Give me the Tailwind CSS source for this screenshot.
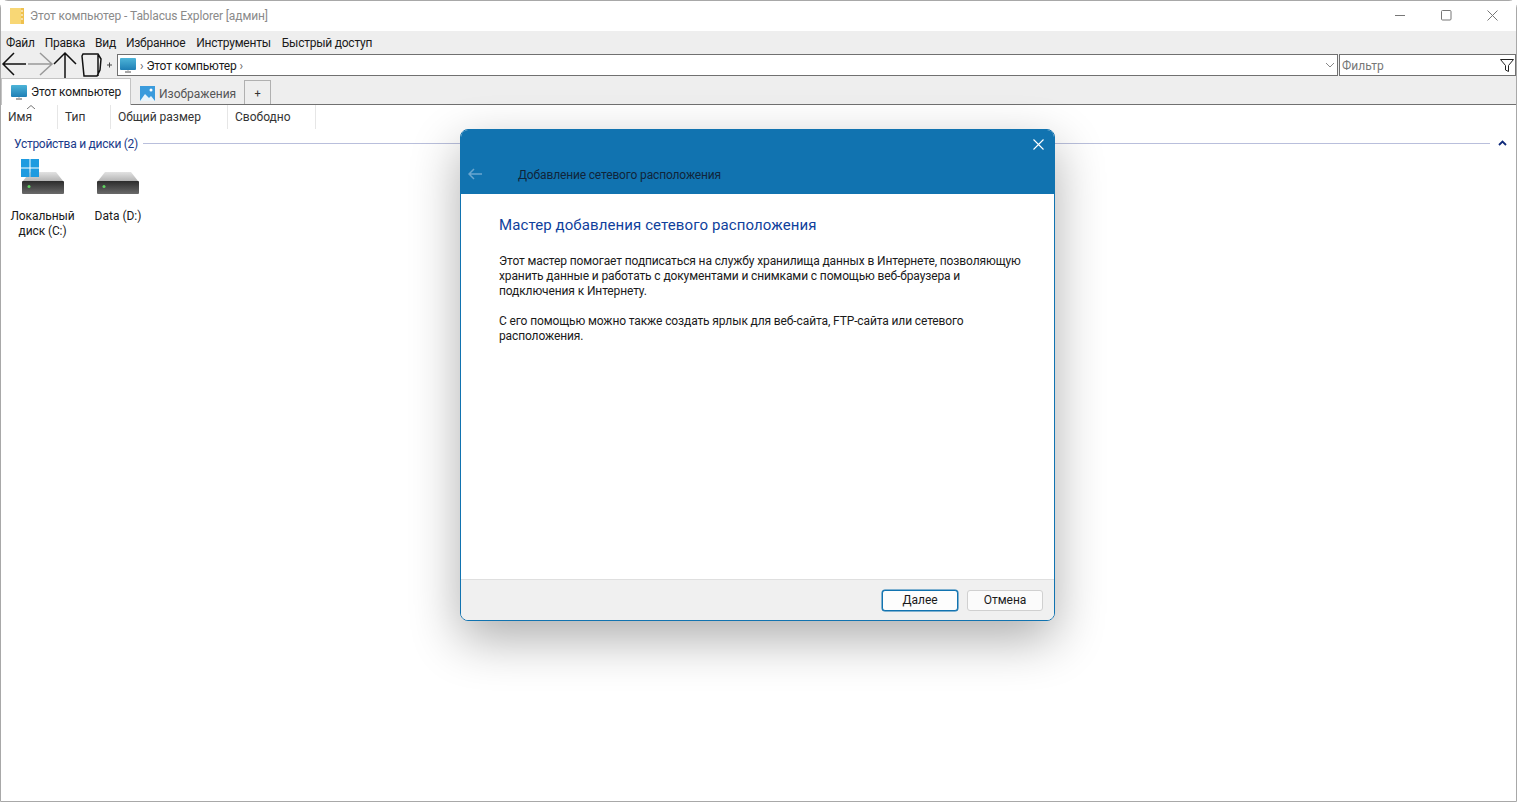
<!DOCTYPE html>
<html lang="ru">
<head>
    <meta charset="UTF-8">
    <title>Этот компьютер - Tablacus Explorer [админ]</title>
    <script src="https://cdn.jsdelivr.net/npm/@tailwindcss/browser@4"></script>
</head>
<body class="bg-white font-['Roboto',sans-serif] text-[12px] text-[#1a1a1a] overflow-hidden">

<div class="relative h-[802px] w-[1517px] overflow-hidden">
    <div class="h-full w-full flex flex-col border border-[#a8a8a8] rounded-t-lg bg-white">

        <!-- TITLE BAR -->
        <div class="h-[30px] shrink-0 flex items-center pl-[9px] bg-white">
            <svg width="15" height="16" viewBox="0 0 15 16"><rect x="0" y="0" width="14" height="16" fill="#f8d775"/><rect x="11" y="0" width="3" height="16" fill="#efc14f"/><path d="M12 2v2M12 6v2M12 10v2" stroke="#fff" stroke-width="1"/></svg>
            <span class="ml-[5px] text-[#8a8a8a] tracking-[-0.12px]">Этот компьютер - Tablacus Explorer [админ]</span>
            <div class="ml-auto flex items-center gap-[35px] pr-[18px] mb-[1px]">
                <svg width="11" height="11" viewBox="0 0 11 11"><path d="M0 5.500h10" stroke="#777" stroke-width="1"/></svg>
                <svg width="11" height="11" viewBox="0 0 11 11"><rect x=".5" y=".5" width="9.500" height="9.500" rx="1" fill="none" stroke="#777"/></svg>
                <svg width="11" height="11" viewBox="0 0 11 11"><path d="M.5.5l10 10M10.500.5l-10 10" stroke="#777"/></svg>
            </div>
        </div>

        <!-- MENU + TOOLBAR + TABS -->
        <div class="bg-[#eeeeee] shrink-0">
            <div class="h-[23px] flex items-center gap-[10px] pl-[5px] tracking-[-0.24px]">
                <span>Файл</span><span>Правка</span><span>Вид</span><span>Избранное</span><span class="ml-[1px]">Инструменты</span><span class="ml-[1px]">Быстрый доступ</span>
            </div>
            <div class="h-[22px] flex items-center">
                <svg width="115" height="26" viewBox="0 0 115 26" class="shrink-0 overflow-visible relative z-20 mt-[2px]">
                    <path d="M25 11H2M13 0L2 11l11 11" fill="none" stroke="#111" stroke-width="1.500"/>
                    <path d="M27 11h24M39 0l12 11-12 11" fill="none" stroke="#999" stroke-width="1.500"/>
                    <path d="M64 25V0M53 11L64 0l11 11" fill="none" stroke="#111" stroke-width="1.500"/>
                    <path d="M81 3l1-2h15l3 5-1 11-3 6H83zM97 2v21" fill="none" stroke="#111" stroke-width="1.500"/>
                    <path d="M106 12h5M108.500 9.500v5" stroke="#444"/>
                </svg>
                <div class="ml-[1px] h-[22px] w-[1221px] flex items-center bg-white border border-[#707070] tracking-[-0.2px]">
                    <svg width="17" height="15" viewBox="0 0 17 15" class="ml-[2px] shrink-0"><defs><linearGradient id="scr" x1="0" y1="0" x2="0" y2="1"><stop offset="0" stop-color="#4db4d8"/><stop offset="1" stop-color="#1f7fb5"/></linearGradient></defs><rect x="0" y="0" width="16" height="12" rx="1" fill="url(#scr)"/><path d="M5 14h6" stroke="#8a8a8a" stroke-width="1.500"/><path d="M8 12v2" stroke="#aaa"/></svg>
                    <span class="ml-[3px] text-[#666] pt-[1px]">›</span>
                    <span class="ml-[3px] pt-[1px]">Этот компьютер</span>
                    <span class="ml-[3px] text-[#666] pt-[1px]">›</span>
                    <svg width="10" height="6" viewBox="0 0 10 6" class="ml-auto mr-[2px]"><path d="M1 1l4 4 4-4" fill="none" stroke="#888"/></svg>
                </div>
                <div class="ml-[1px] h-[22px] w-[177px] flex items-center bg-white border border-[#707070] pl-[2px] text-[#777]">
                    <span class="pt-[1px]">Фильтр</span>
                    <svg width="14" height="13" viewBox="0 0 14 13" class="ml-auto mr-[1px]"><path d="M.5.5h13L8.500 6.500v6l-3-1.500V6.500z" fill="none" stroke="#222"/></svg>
                </div>
            </div>
            <div class="h-[28px] flex items-end relative">
                <div class="h-[27px] w-[130px] flex items-center bg-white border border-b-0 border-[#c4c4c4] relative z-10 -mb-px pl-[9px] tracking-[-0.2px]">
                    <svg width="17" height="15" viewBox="0 0 17 15" class="shrink-0"><rect x="0" y="0" width="16" height="12" rx="1" fill="url(#scr)"/><path d="M5 14h6" stroke="#8a8a8a" stroke-width="1.500"/><path d="M8 12v2" stroke="#aaa"/></svg>
                    <span class="ml-[3px]">Этот компьютер</span>
                </div>
                <div class="h-[24px] w-[114px] flex items-center border-r border-[#b0b0b0] pl-[9px] pt-[3px]">
                    <svg width="15" height="15" viewBox="0 0 15 15" class="shrink-0"><rect width="15" height="15" fill="#3a9bdc"/><path d="M0 15l5-7 4 4 2-2 4 5z" fill="#e8f4fb"/><circle cx="11" cy="4" r="1.500" fill="#fff"/></svg>
                    <span class="ml-[4px] text-[#555]">Изображения</span>
                </div>
                <div class="h-[24px] w-[26px] flex items-center justify-center border-r border-t border-[#b0b0b0] text-[11px] text-[#333] pt-[3px]">+</div>
            </div>
        </div>

        <!-- FILE VIEW -->
        <div class="flex-1 bg-white border-t border-[#707070] relative">
            <div class="h-[24px] flex items-center text-[#333]">
                <div class="relative w-[57px] h-full flex items-center pl-[7px] border-r border-[#e6e6e6]">Имя
                    <svg width="8" height="4" viewBox="0 0 8 4" class="absolute left-[26px] top-0"><path d="M0 4l4-3.500L8 4" fill="none" stroke="#777"/></svg>
                </div>
                <div class="w-[53px] h-full flex items-center pl-[7px] border-r border-[#e6e6e6]">Тип</div>
                <div class="w-[117px] h-full flex items-center pl-[7px] border-r border-[#e6e6e6]">Общий размер</div>
                <div class="w-[88px] h-full flex items-center pl-[7px] border-r border-[#e6e6e6]">Свободно</div>
            </div>
            <div class="flex items-center h-[20px] mt-[4px] pl-[13px] pr-[9px]">
                <span class="text-[#1a3a8a] tracking-[-0.27px] pt-[1px]">Устройства и диски (2)</span>
                <div class="flex-1 h-px bg-[#b9bfdc] ml-[5px]"></div>
                <svg width="9" height="6" viewBox="0 0 9 6" class="ml-[8px]"><path d="M1 5l3.500-3.500L8 5" fill="none" stroke="#0f2a7a" stroke-width="1.800"/></svg>
            </div>
            <div class="flex mt-[6px] pl-[9px]">
                <div class="w-[65px] flex flex-col items-center">
                    <div class="relative w-[48px] h-[47px]">
                        <svg width="44" height="24" viewBox="0 0 44 24" class="absolute left-[2px] top-[12px]"><defs><linearGradient id="top" x1="0" y1="0" x2="0" y2="1"><stop offset="0" stop-color="#e2e2e2"/><stop offset="1" stop-color="#b4b4b4"/></linearGradient><linearGradient id="body" x1="0" y1="0" x2="0" y2="1"><stop offset="0" stop-color="#2c2c2c"/><stop offset="1" stop-color="#6a6a6a"/></linearGradient></defs><path d="M9 1h26l7 9H2z" fill="url(#top)"/><rect x="1" y="10" width="42" height="13" rx="1" fill="url(#body)"/><circle cx="8" cy="15.500" r="1.500" fill="#5fd35f"/></svg>
                        <svg width="18" height="18" viewBox="0 0 18 18" class="absolute left-[2px] top-0"><path d="M0 0h8.500v8.500H0zM9.500 0H18v8.500H9.500zM0 9.500h8.500V18H0zM9.500 9.500H18V18H9.500z" fill="#1e9be0"/></svg>
                    </div>
                    <div class="text-center leading-[15px] mt-[3px] tracking-[-0.1px]">Локальный диск (C:)</div>
                </div>
                <div class="w-[86px] flex flex-col items-center">
                    <div class="relative w-[48px] h-[47px]">
                        <svg width="44" height="24" viewBox="0 0 44 24" class="absolute left-[2px] top-[12px]"><path d="M9 1h26l7 9H2z" fill="url(#top)"/><rect x="1" y="10" width="42" height="13" rx="1" fill="url(#body)"/><circle cx="8" cy="15.500" r="1.500" fill="#5fd35f"/></svg>
                    </div>
                    <div class="text-center leading-[15px] mt-[3px]">Data (D:)</div>
                </div>
            </div>
        </div>
    </div>

    <!-- WIZARD DIALOG -->
    <div class="absolute left-[460px] top-[129px] w-[595px] h-[492px] rounded-lg border border-[#1173b0] bg-white flex flex-col overflow-hidden shadow-[0_18px_50px_rgba(0,0,0,0.32)]">
        <div class="h-[64px] shrink-0 bg-[#1173b0] relative">
            <svg width="14" height="12" viewBox="0 0 14 12" class="absolute left-[7px] top-[38px]"><path d="M14 6H1M6 1L1 6l5 5" fill="none" stroke="#6aa6cf" stroke-width="1.500"/></svg>
            <span class="absolute left-[57px] top-[36px] text-[#10253a] tracking-[-0.15px]">Добавление сетевого расположения</span>
            <svg width="11" height="11" viewBox="0 0 11 11" class="absolute right-[10px] top-[9px]"><path d="M.5.5l10 10M10.500.5l-10 10" stroke="#fff" stroke-width="1.100"/></svg>
        </div>
        <div class="flex-1 pl-[38px] pr-[20px] pt-[20px] whitespace-nowrap">
            <h1 class="text-[15px] leading-[22px] text-[#0f3f9c] tracking-[0.1px]">Мастер добавления сетевого расположения</h1>
            <div class="tracking-[-0.12px] pt-[1px]">
                <p class="mt-[17px] leading-[15px]">Этот мастер помогает подписаться на службу хранилища данных в Интернете, позволяющую<br>хранить данные и работать с документами и снимками с помощью веб-браузера и<br>подключения к Интернету.</p>
                <p class="mt-[15px] leading-[15px]">С его помощью можно также создать ярлык для веб-сайта, FTP-сайта или сетевого<br>расположения.</p>
            </div>
        </div>
        <div class="h-[41px] shrink-0 bg-[#f0f0f0] border-t border-[#dfdfdf] flex items-center justify-end gap-[9px] pr-[11px]">
            <button class="w-[76px] h-[21px] rounded-[3px] bg-[#fdfdfd] border border-[#1173b0] shadow-[0_0_0_0.5px_#1173b0]">Далее</button>
            <button class="w-[76px] h-[21px] rounded-[3px] bg-[#fbfbfb] border border-[#d0d0d0]">Отмена</button>
        </div>
    </div>
</div>

</body>
</html>
